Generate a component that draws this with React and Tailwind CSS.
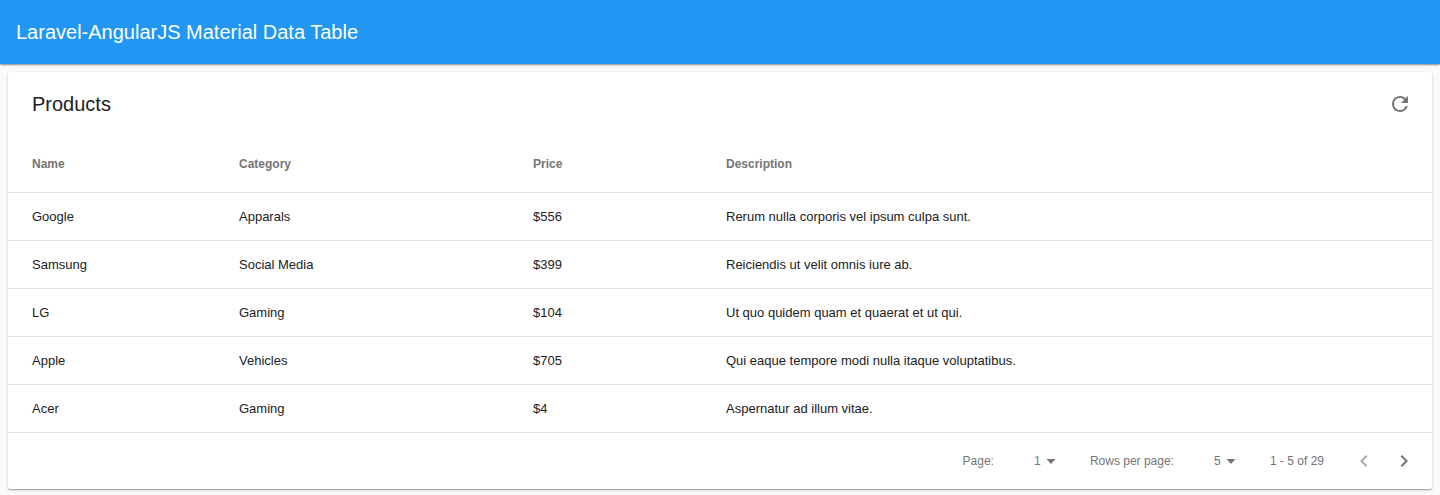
import { MdRefresh, MdChevronLeft, MdChevronRight, MdArrowDropDown } from "react-icons/md";

const products = [
  ["Google", "Apparals", "$556", "Rerum nulla corporis vel ipsum culpa sunt."],
  ["Samsung", "Social Media", "$399", "Reiciendis ut velit omnis iure ab."],
  ["LG", "Gaming", "$104", "Ut quo quidem quam et quaerat et ut qui."],
  ["Apple", "Vehicles", "$705", "Qui eaque tempore modi nulla itaque voluptatibus."],
  ["Acer", "Gaming", "$4", "Aspernatur ad illum vitae."],
];

const columns = [
  ["Name", "w-[207px]"],
  ["Category", "w-[294px]"],
  ["Price", "w-[193px]"],
  ["Description", ""],
];

function PageSelect({ id, label, options }) {
  return (
    <div className="flex items-center">
      <label htmlFor={id}>{label}</label>
      <div className="relative ml-8 flex items-center">
        <select id={id} className="w-16 appearance-none bg-transparent pl-2 text-xs">
          {options.map((o) => (
            <option key={o}>{o}</option>
          ))}
        </select>
        <svg viewBox="0 0 10 5" className="pointer-events-none absolute left-5 h-[5px] w-[10px]" fill="currentColor" aria-hidden="true">
          <path d="M0.5 0h9L5 5z" />
        </svg>
      </div>
    </div>
  );
}

export default function App() {
  return (
    <div className="min-h-screen bg-[#fafafa] font-['Liberation_Sans',sans-serif] text-[#212121]">
      <header className="flex h-16 items-center bg-[#2196f3] px-4 shadow-[0_1px_3px_rgba(0,0,0,0.2),0_1px_1px_rgba(0,0,0,0.14),0_2px_1px_-1px_rgba(0,0,0,0.12)]">
        <h1 className="text-xl text-white">Laravel-AngularJS Material Data Table</h1>
      </header>
      <main className="p-2">
        <section className="rounded-xs bg-white shadow-[0_1px_3px_rgba(0,0,0,0.2),0_1px_1px_rgba(0,0,0,0.14),0_2px_1px_-1px_rgba(0,0,0,0.12)]">
          <div className="flex h-16 items-center justify-between pr-5 pl-6">
            <h2 className="text-xl">Products</h2>
            <button aria-label="Refresh" className="text-[#757575]">
              <MdRefresh className="size-6" />
            </button>
          </div>
          <table className="w-full table-fixed text-left text-[13px] leading-[18px]">
            <thead>
              <tr className="h-14 text-xs text-[#757575]">
                {columns.map(([name, width]) => (
                  <th key={name} className={`pl-6 font-bold ${width}`}>{name}</th>
                ))}
              </tr>
            </thead>
            <tbody>
              {products.map((row) => (
                <tr key={row[0]} className="h-12 border-t border-[#e0e0e0]">
                  {row.map((cell, i) => (
                    <td key={i} className="pt-0.5 pl-6">{cell}</td>
                  ))}
                </tr>
              ))}
            </tbody>
          </table>
          <nav className="flex h-[57px] items-center justify-end border-t border-[#e0e0e0] pr-4 text-xs text-[#757575]">
            <PageSelect id="page" label="Page:" options={[1, 2, 3, 4, 5, 6]} />
            <PageSelect id="rows" label="Rows per page:" options={[5, 10, 15]} />
            <span>1 - 5 of 29</span>
            <button aria-label="Previous" disabled className="ml-7 opacity-60"><MdChevronLeft className="size-6" /></button>
            <button aria-label="Next" className="ml-4"><MdChevronRight className="size-6" /></button>
          </nav>
        </section>
      </main>
    </div>
  );
}
